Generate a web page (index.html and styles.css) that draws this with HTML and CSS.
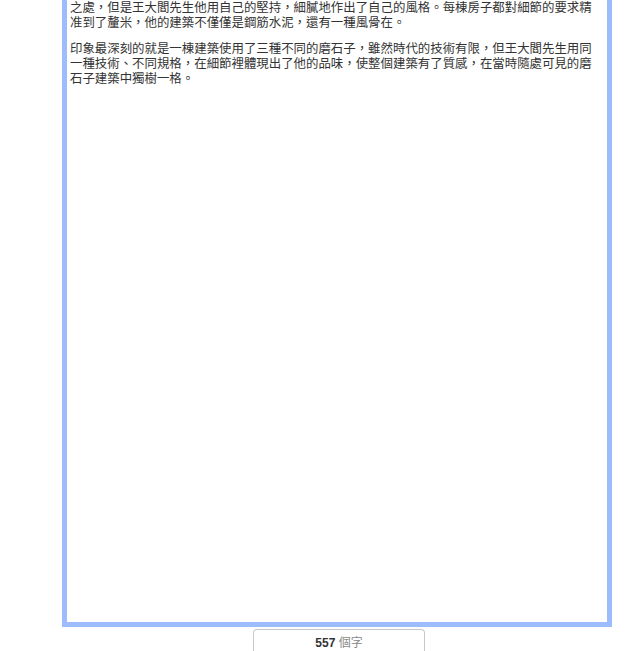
FILE: index.html
```html
<!DOCTYPE html>
<html lang="zh-Hant">
<head>
<meta charset="utf-8">
<title>字數</title>
<link rel="stylesheet" href="styles.css">
</head>
<body>
<div class="page">
  <div class="editor">
    <p>之處，但是王大閻先生他用自己的堅持，細膩地作出了自己的風格。每棟房子都對細節的要求精准到了釐米，他的建築不僅僅是鋼筋水泥，還有一種風骨在。</p>
    <p>印象最深刻的就是一棟建築使用了三種不同的磨石子，雖然時代的技術有限，但王大閻先生用同一種技術、不同規格，在細節裡體現出了他的品味，使整個建築有了質感，在當時隨處可見的磨石子建築中獨樹一格。</p>
  </div>
  <div class="counter"><b>557</b> 個字</div>
</div>
</body>
</html>
```
FILE: styles.css
```css
html, body {
  margin: 0;
  padding: 0;
  background: #ffffff;
}
.page {
  width: 640px;
  height: 651px;
  overflow: hidden;
  display: flex;
  flex-direction: column;
  align-items: flex-start;
}
.editor {
  flex-shrink: 0;
  box-sizing: border-box;
  margin-left: 62px;
  width: 550px;
  height: 627px;
  border: 5px solid #9cbcfd;
  border-top: 0;
  padding: 1px 3px 0 3px;
  font-family: "Liberation Sans", "Noto Sans CJK TC", sans-serif;
  font-size: 12.43px;
  line-height: 15px;
  color: #333333;
  background: #ffffff;
}
.editor p {
  margin: 0 0 11px 0;
}
.counter {
  flex-shrink: 0;
  box-sizing: border-box;
  margin: 2px 0 0 253px;
  width: 172px;
  height: 30px;
  border: 1px solid #c9c9c9;
  border-bottom: 0;
  border-radius: 4px 4px 0 0;
  text-align: center;
  padding-top: 6px;
  font-family: "Liberation Sans", "Noto Sans CJK TC", sans-serif;
  font-size: 12px;
  line-height: 14px;
  color: #888888;
}
.counter b {
  color: #333333;
  font-weight: bold;
}
```
